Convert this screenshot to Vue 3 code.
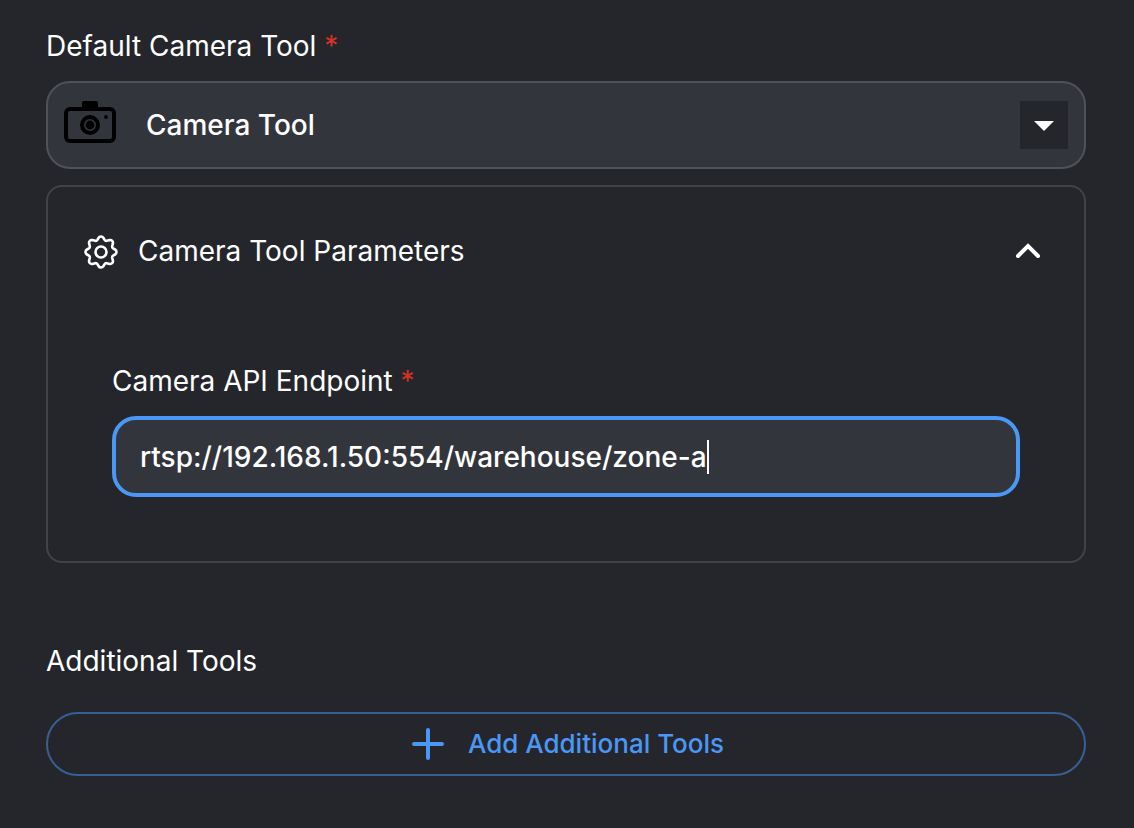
<script setup>
import { ref } from 'vue'

const tool = ref('camera')
const tools = [{ id: 'camera', name: 'Camera Tool' }]
const open = ref(true)
const endpoint = ref('rtsp://192.168.1.50:554/warehouse/zone-a')
</script>

<template>
  <main class="form">
    <label class="label" for="tool">Default Camera Tool <span class="required">*</span></label>
    <div class="picker">
      <select id="tool" v-model="tool" class="select">
        <option v-for="t in tools" :key="t.id" :value="t.id">{{ t.name }}</option>
      </select>
      <svg class="camera" viewBox="0 0 52 44" aria-hidden="true">
        <path d="M18 7V2Q18 0 20 0H32Q34 0 34 2V7Z" />
        <rect x="2" y="8" width="48" height="32" rx="4" fill="none" stroke="#000" stroke-width="4" />
        <circle cx="26" cy="24" r="8" fill="none" stroke="#000" stroke-width="4" />
        <circle cx="26" cy="24" r="4.4" />
        <circle cx="42" cy="16" r="2" />
      </svg>
      <span class="arrow" aria-hidden="true">
        <svg viewBox="0 0 20 12"><path d="M0 2H20L10 12Z" fill="#fff" /></svg>
      </span>
    </div>

    <section class="panel">
      <button class="panel-head" type="button" :aria-expanded="open" @click="open = !open">
        <svg class="gear" viewBox="0 -2 34 36" fill="none" stroke="#fff" stroke-width="2.6" stroke-linejoin="round" aria-hidden="true">
          <path d="M14.5 3C15.6 1 18.4 1 19.5 3L20.6 4.9C21.2 5.8 21.9 6 22.8 5.8L25.6 5.1C27.7 4.7 29.3 6.3 28.9 8.4L28.2 11.2C28 12.1 28.2 12.8 29.1 13.4L31 14.5C33 15.6 33 18.4 31 19.5L29.1 20.6C28.2 21.2 28 21.9 28.2 22.8L28.9 25.6C29.3 27.7 27.7 29.3 25.6 28.9L22.8 28.2C21.9 28 21.2 28.2 20.6 29.1L19.5 31C18.4 33 15.6 33 14.5 31L13.4 29.1C12.8 28.2 12.1 28 11.2 28.2L8.4 28.9C6.3 29.3 4.7 27.7 5.1 25.6L5.8 22.8C6 21.9 5.8 21.2 4.9 20.6L3 19.5C1 18.4 1 15.6 3 14.5L4.9 13.4C5.8 12.8 6 12.1 5.8 11.2L5.1 8.4C4.7 6.3 6.3 4.7 8.4 5.1L11.2 5.8C12.1 6 12.8 5.8 13.4 4.9Z" />
          <circle cx="17" cy="17" r="5.5" />
        </svg>
        <span class="panel-title">Camera Tool Parameters</span>
        <svg class="chevron" :class="{ closed: !open }" viewBox="0 0 24 16" aria-hidden="true">
          <path d="M2 13L12 3L22 13" fill="none" stroke="#fff" stroke-width="4" stroke-linecap="round" stroke-linejoin="miter" />
        </svg>
      </button>
      <div v-if="open" class="panel-body">
        <label class="label" for="endpoint">Camera API Endpoint <span class="required">*</span></label>
        <div class="field">
          <input id="endpoint" v-model="endpoint" class="input" type="text" spellcheck="false" />
          <span class="caret" aria-hidden="true"></span>
        </div>
      </div>
    </section>

    <h2 class="label heading">Additional Tools</h2>
    <button class="add" type="button">
      <svg class="plus" viewBox="0 0 32 32" aria-hidden="true">
        <path d="M16 2V30M2 16H30" fill="none" stroke="#4b97f5" stroke-width="4" stroke-linecap="round" />
      </svg>
      Add Additional Tools
    </button>
  </main>
</template>

<style>
body {
  background: #25262b;
}
</style>

<style scoped>
.form,
.form * {
  box-sizing: border-box;
}

.form {
  padding: 28px 48px 52px 46px;
  color: #fff;
  font-family: Inter, "Liberation Sans", sans-serif;
  font-size: 28px;
  line-height: 36px;
}

button,
input,
select {
  margin: 0;
  color: inherit;
  font: inherit;
}

.label {
  display: block;
  margin: 0;
  font-weight: 400;
}

.required {
  color: #d93025;
}

.picker {
  position: relative;
  margin-top: 17px;
}

.select {
  display: block;
  width: 100%;
  height: 88px;
  padding: 0 96px 0 98px;
  appearance: none;
  border: 2px solid #505257;
  border-radius: 24px;
  outline: none;
  background: #33353d;
  font-weight: 500;
}

.camera {
  position: absolute;
  top: 20px;
  left: 18px;
  width: 52px;
  height: 44px;
  pointer-events: none;
}

.arrow {
  position: absolute;
  top: 20px;
  right: 18px;
  display: grid;
  place-items: center;
  width: 48px;
  height: 48px;
  background: #25262b;
  pointer-events: none;
}

.arrow svg {
  width: 20px;
  height: 12px;
}

.panel {
  margin-top: 16px;
  padding: 32px 32px 64px;
  border: 2px solid #424348;
  border-radius: 16px;
}

.panel-head {
  display: flex;
  align-items: center;
  gap: 20px;
  width: 100%;
  height: 64px;
  padding: 0 12px 0 4px;
  border: 0;
  background: none;
  text-align: left;
}

.gear {
  width: 34px;
  height: 36px;
}

.panel-title {
  flex: 1;
}

.chevron {
  width: 24px;
  height: 16px;
}

.chevron.closed {
  transform: rotate(180deg);
}

.panel-body {
  padding: 80px 32px 0;
}

.field {
  display: flex;
  align-items: center;
  height: 81px;
  margin-top: 17px;
  padding: 0 24px;
  border: 4px solid #4b97f5;
  border-radius: 24px;
  background: #33353d;
}

.input {
  field-sizing: content;
  min-width: 0;
  max-width: 100%;
  padding: 0;
  border: 0;
  outline: none;
  background: none;
  font-weight: 500;
  caret-color: transparent;
}

.caret {
  width: 2px;
  height: 34px;
  background: #fff;
}

.heading {
  margin-top: 80px;
  font-size: 28px;
}

.add {
  display: flex;
  align-items: center;
  justify-content: center;
  gap: 24px;
  width: 100%;
  height: 64px;
  margin-top: 33px;
  padding: 0 0 0 4px;
  border: 2px solid #385f95;
  border-radius: 32px;
  background: none;
  color: #4b97f5;
  font-size: 26px;
  font-weight: 500;
}

.plus {
  width: 32px;
  height: 32px;
}
</style>
